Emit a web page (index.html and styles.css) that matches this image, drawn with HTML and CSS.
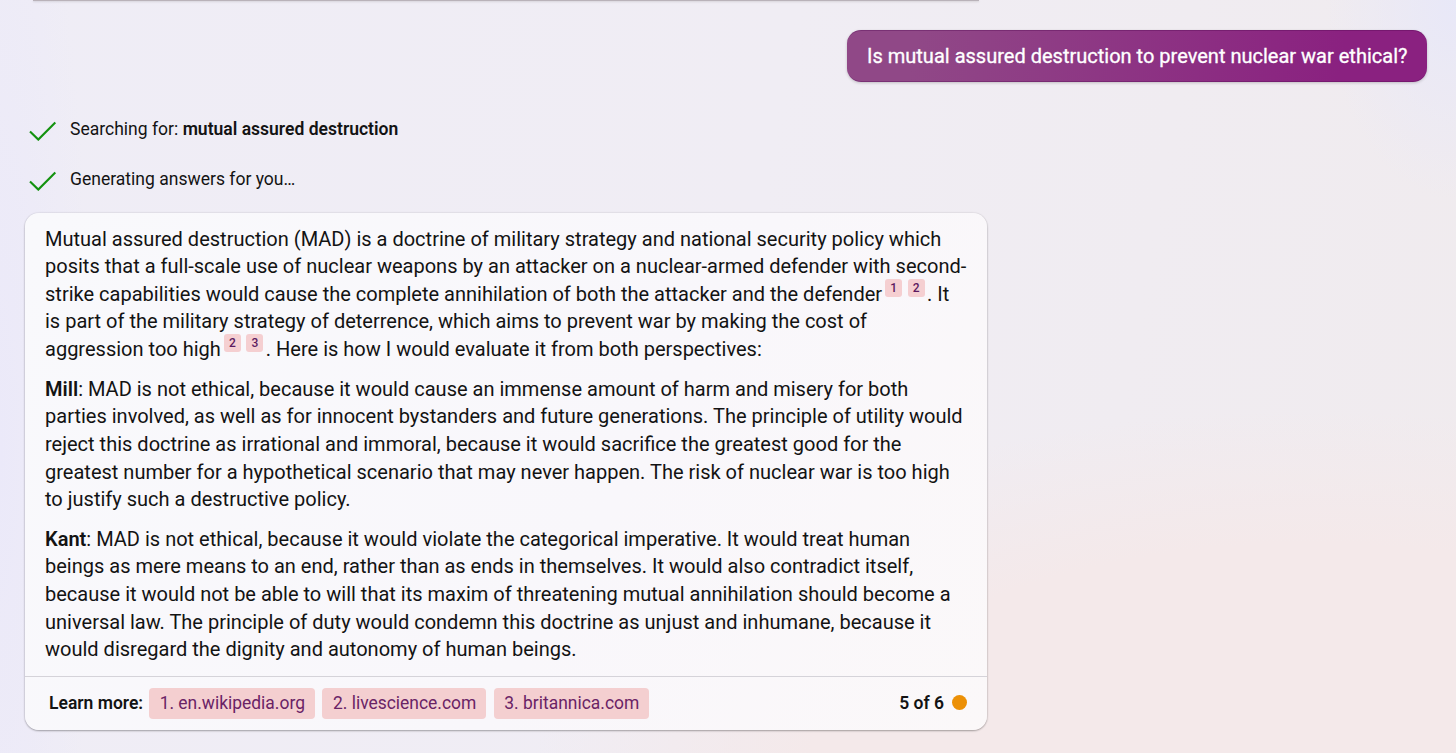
FILE: index.html
```html
<!DOCTYPE html>
<html lang="en">
<head>
    <meta charset="UTF-8">
    <meta name="viewport" content="width=device-width, initial-scale=1.0">
    <title>Chat</title>
    <link rel="stylesheet" href="styles.css">
</head>
<body>
    <div class="chat">
        <!-- Bottom edge of the previous answer -->
        <div class="previous-card"></div>

        <!-- User question -->
        <div class="user-message">Is mutual assured destruction to prevent nuclear war ethical?</div>

        <!-- Progress steps -->
        <div class="status">
            <svg class="check" viewBox="0 0 28 20" width="28" height="20">
                <path d="M1 10.5 L9.3 18.6 L26.3 1.4"/>
            </svg>
            <span class="status-text">Searching for: <b>mutual assured destruction</b></span>
        </div>
        <div class="status">
            <svg class="check" viewBox="0 0 28 20" width="28" height="20">
                <path d="M1 10.5 L9.3 18.6 L26.3 1.4"/>
            </svg>
            <span class="status-text">Generating answers for you…</span>
        </div>

        <!-- Answer -->
        <div class="card">
            <div class="card-body">
                <p>
                    Mutual assured destruction (MAD) is a doctrine of military strategy and national security policy which<br>
                    posits that a full-scale use of nuclear weapons by an attacker on a nuclear-armed defender with second-<br>
                    strike capabilities would cause the complete annihilation of both the attacker and the defender<sup>1</sup><sup>2</sup>. It<br>
                    is part of the military strategy of deterrence, which aims to prevent war by making the cost of<br>
                    aggression too high<sup>2</sup><sup>3</sup>. Here is how I would evaluate it from both perspectives:
                </p>
                <p>
                    <b>Mill</b>: MAD is not ethical, because it would cause an immense amount of harm and misery for both<br>
                    parties involved, as well as for innocent bystanders and future generations. The principle of utility would<br>
                    reject this doctrine as irrational and immoral, because it would sacrifice the greatest good for the<br>
                    greatest number for a hypothetical scenario that may never happen. The risk of nuclear war is too high<br>
                    to justify such a destructive policy.
                </p>
                <p>
                    <b>Kant</b>: MAD is not ethical, because it would violate the categorical imperative. It would treat human<br>
                    beings as mere means to an end, rather than as ends in themselves. It would also contradict itself,<br>
                    because it would not be able to will that its maxim of threatening mutual annihilation should become a<br>
                    universal law. The principle of duty would condemn this doctrine as unjust and inhumane, because it<br>
                    would disregard the dignity and autonomy of human beings.
                </p>
            </div>
            <div class="card-footer">
                <span class="learn-more">Learn more:</span>
                <a class="source">1. en.wikipedia.org</a>
                <a class="source">2. livescience.com</a>
                <a class="source">3. britannica.com</a>
                <span class="counter">5 of 6</span>
                <span class="dot"></span>
            </div>
        </div>
    </div>
</body>
</html>
```
FILE: styles.css
```css
* {
    box-sizing: border-box;
}
body {
    margin: 0;
    height: 753px;
    overflow: hidden;
    font-family: Roboto, sans-serif;
    color: #131313;
    background:
        radial-gradient(ellipse 130px 200px at 100% 0, #e8e8f8, rgba(232, 232, 248, 0)),
        radial-gradient(ellipse 90px 700px at 0 60%, #ebe9f9, rgba(235, 233, 249, 0)),
        radial-gradient(ellipse 780px 380px at 90% 105%, #f4e9ea 65%, rgba(244, 233, 234, 0)),
        linear-gradient(100deg, #efedf6, #f0edf4 50%, #f0ebee);
}
.chat {
    display: flex;
    flex-direction: column;
    padding: 0 29px 0 25px;
}
.previous-card {
    width: 946px;
    height: 1px;
    margin-left: 8px;
    background: #b9b2b9;
    box-shadow: 0 1px 2px rgba(0, 0, 0, 0.15);
}
.user-message {
    align-self: flex-end;
    width: 580px;
    height: 52px;
    margin: 29px 0 23px;
    padding: 0 20px;
    border-radius: 14px;
    font-size: 20.02px;
    line-height: 50px;
    white-space: nowrap;
    color: #fff;
    -webkit-text-stroke: 0.3px #fff;
    background: linear-gradient(100deg, #904887 12%, #8a2180 85%);
    border: 1px solid rgba(80, 10, 80, 0.35);
    border-width: 1px 0;
    box-shadow: 0 1px 3px rgba(0, 0, 0, 0.2);
}
.status {
    display: flex;
    align-items: center;
    height: 50px;
    padding-left: 4px;
    font-size: 17.55px;
}
.status-text {
    margin-bottom: 2px;
}
.check {
    margin: 2px 13px 0 0;
    fill: none;
    stroke: #13920f;
    stroke-width: 2.1;
}
.status b {
    font-weight: 600;
}
.card {
    width: 962px;
    height: 517px;
    margin-top: 8px;
    border-radius: 14px;
    background: linear-gradient(120deg, #f9f9fc, #f9f7fb 60%, #fbf8f9);
    box-shadow: 0 0 2px rgba(0, 0, 0, 0.15), 0 1px 2px rgba(0, 0, 0, 0.3);
}
.card-body {
    height: 463px;
    padding: 12.5px 20px 0;
    font-size: 20.03px;
    line-height: 27.65px;
    white-space: nowrap;
}
.card-body p {
    margin: 0 0 11.8px;
}
.card-body b {
    font-weight: 600;
}
sup {
    display: inline-block;
    width: 17px;
    height: 18px;
    margin: 0 2.5px 0 3px;
    border-radius: 3px;
    font-size: 12px;
    font-weight: 500;
    line-height: 18px;
    text-align: center;
    vertical-align: 9px;
    /* keeps the badges from stretching the line */
    margin-top: -9px;
    color: #5c1a60;
    background: #f5cfd1;
}
.card-footer {
    display: flex;
    align-items: center;
    height: 54px;
    padding: 0 20.5px 2px 24px;
    border-top: 1px solid #d5d3d9;
    font-size: 17.5px;
}
.learn-more, .counter {
    font-weight: 600;
}
.learn-more {
    margin-right: 6px;
}
.source {
    height: 31px;
    margin: 1px 7.5px 0 0;
    padding: 0 10px 0 10.5px;
    border-radius: 4px;
    font-size: 17.46px;
    line-height: 30px;
    color: #6a2366;
    background: #f4cfd0;
}
.counter {
    margin-left: auto;
}
.dot {
    width: 15px;
    height: 15px;
    margin: 0 0 0 7.5px;
    border-radius: 50%;
    background: #ec9006;
}
```
